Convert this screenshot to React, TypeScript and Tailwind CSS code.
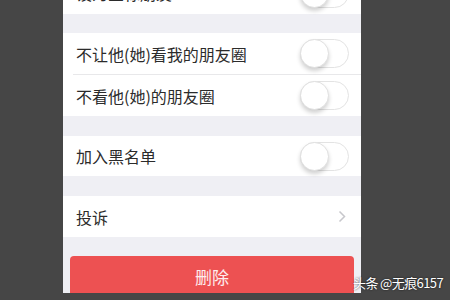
const font = { fontFamily: '"Noto Sans CJK SC", "Noto Sans", sans-serif' };

function Toggle() {
  return (
    <div className="relative w-[49px] h-[29px] rounded-full border border-[#e3e3e3] bg-white">
      <div className="absolute left-[-1px] top-[-1px] w-[29px] h-[29px] rounded-full bg-white border border-[#e0e0e0] shadow-[0_3px_4px_rgba(0,0,0,0.18)]" />
    </div>
  );
}

function Row({ label, height, right }: { label: string; height: string; right: React.ReactNode }) {
  return (
    <div className={`flex shrink-0 items-center justify-between bg-white pl-[13px] pr-[12px] ${height}`}>
      <span className="text-[16px] text-[#2b2b2b] leading-none">{label}</span>
      {right}
    </div>
  );
}

export default function App() {
  return (
    <div className="relative w-[450px] h-[300px] overflow-hidden bg-[#464646]" style={font}>
      {/* PHONE PANEL */}
      <div className="ml-[63px] w-[298px] h-[293px] overflow-hidden bg-[#efeff4] flex flex-col">
        <div className="-mt-[28px] shrink-0">
          <Row label="设为星标朋友" height="h-[42px]" right={<Toggle />} />
        </div>

        <div className="h-[19px] shrink-0" />

        <Row label="不让他(她)看我的朋友圈" height="h-[41px]" right={<Toggle />} />
        <div className="bg-white pl-[10px] shrink-0">
          <div className="h-px bg-[#e8e8ea]" />
        </div>
        <Row label="不看他(她)的朋友圈" height="h-[41px]" right={<Toggle />} />

        <div className="h-[20px] shrink-0" />

        <Row label="加入黑名单" height="h-[40px]" right={<Toggle />} />

        <div className="h-[20px] shrink-0" />

        <div className="flex shrink-0 items-center justify-between bg-white pl-[13px] pr-[15px] h-[41px]">
          <span className="text-[16px] text-[#2b2b2b] leading-none">投诉</span>
          <svg width="8" height="13" viewBox="0 0 8 13" fill="none">
            <path d="M1.5 1.5 L6.5 6.5 L1.5 11.5" stroke="#c7c7cc" strokeWidth="1.5" />
          </svg>
        </div>

        <div className="h-[19px] shrink-0" />

        <div className="mx-[7px] h-[44px] shrink-0 rounded-[4px] bg-[#ed5152] flex items-center justify-center">
          <span className="text-[17px] text-white/90 -mt-[2px]">删除</span>
        </div>
      </div>

      {/* WATERMARK */}
      <div className="absolute left-[353px] top-[276px] text-[13px] leading-none tracking-[-0.6px] text-white [text-shadow:0_0_2px_rgba(0,0,0,0.8)] whitespace-nowrap">
        头条 @无痕6157
      </div>
    </div>
  );
}
